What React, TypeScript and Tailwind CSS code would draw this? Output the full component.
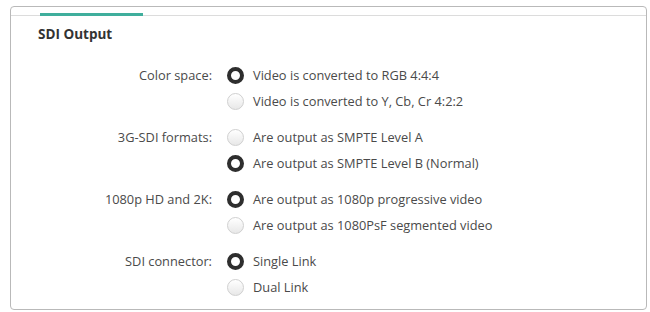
import React from "react";

type Group = { label: string; options: string[]; selected: number };

const groups: Group[] = [
  { label: "Color space:", options: ["Video is converted to RGB 4:4:4", "Video is converted to Y, Cb, Cr 4:2:2"], selected: 0 },
  { label: "3G-SDI formats:", options: ["Are output as SMPTE Level A", "Are output as SMPTE Level B (Normal)"], selected: 1 },
  { label: "1080p HD and 2K:", options: ["Are output as 1080p progressive video", "Are output as 1080PsF segmented video"], selected: 0 },
  { label: "SDI connector:", options: ["Single Link", "Dual Link"], selected: 0 },
];

function Radio({ on }: { on: boolean }) {
  return on ? (
    <span className="block w-[17px] h-[17px] rounded-full border-[4px] border-[#2e2e2e] bg-white shrink-0" />
  ) : (
    <span className="block w-[17px] h-[17px] rounded-full border border-[#d0d0d0] bg-gradient-to-b from-[#ffffff] to-[#e8e8e8] shrink-0" />
  );
}

export default function App() {
  return (
    <div className="w-[650px] h-[312px] bg-white pt-[6px] pl-[10px]" style={{ fontFamily: '"Open Sans", "Noto Sans", sans-serif' }}>
      <div className="w-[637px] h-[304px] border border-[#b9b9b9] rounded-[4px] flex flex-col">
        <div className="h-[6px]" />
        <div className="h-[3px] border-b border-[#dcdcdc] flex">
          <div className="ml-[29px] w-[103px] h-[3px] bg-[#3fae9c]" />
        </div>
        <div className="pl-[27px] pt-[9px] h-[38px] text-[13.5px] font-bold text-[#333] leading-[18px]">SDI Output</div>
        <div className="flex flex-col gap-[10px] pt-[8px]">
          {groups.map((g) => (
            <div key={g.label} className="flex">
              <div className="w-[201px] text-right text-[12.8px] text-[#4a4a4a] leading-[26px]">{g.label}</div>
              <div className="flex flex-col pl-[15px]">
                {g.options.map((o, i) => (
                  <div key={o} className="flex items-center h-[26px] gap-[9px]">
                    <Radio on={i === g.selected} />
                    <span className="text-[12.8px] text-[#4a4a4a] leading-[26px]">{o}</span>
                  </div>
                ))}
              </div>
            </div>
          ))}
        </div>
      </div>
    </div>
  );
}
